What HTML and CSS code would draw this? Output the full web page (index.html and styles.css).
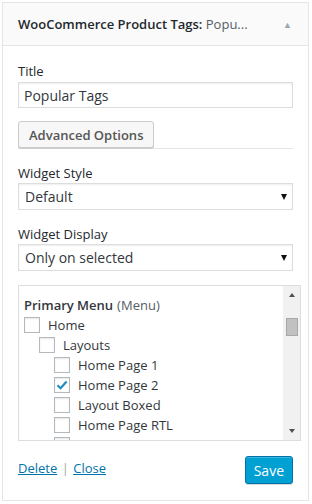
FILE: index.html
```html
<html>
  <head>
    <title>Widget</title>
    <link rel="stylesheet" href="styles.css">
  </head>
  <body>
    <div class="widget">
      <!-- Cabeçalho do widget -->
      <div class="widget-top">
        <div class="widget-title">WooCommerce Product Tags: <span class="in-title">Popu...</span></div>
        <span class="toggle">&#9650;</span>
      </div>
      <div class="widget-inside">
        <p class="label">Title</p>
        <input class="text-field" type="text" value="Popular Tags">

        <div class="tabs">
          <button class="button">Advanced Options</button>
        </div>

        <p class="label">Widget Style</p>
        <div class="select-wrap">
          <select class="select"><option>Default</option></select>
          <span class="arrow"></span>
        </div>

        <p class="label">Widget Display</p>
        <div class="select-wrap">
          <select class="select"><option>Only on selected</option></select>
          <span class="arrow"></span>
        </div>

        <!-- Lista de páginas com rolagem -->
        <div class="checklist">
          <ul class="items">
            <li class="group"><b>Primary Menu</b> (Menu)</li>
            <li class="lvl0"><span class="check"></span>Home</li>
            <li class="lvl1"><span class="check"></span>Layouts</li>
            <li class="lvl2"><span class="check"></span>Home Page 1</li>
            <li class="lvl2"><span class="check checked"><svg width="14" height="14" viewBox="0 0 14 14"><path d="M2.5 7.2 L5.6 10.2 L11.6 3.4" fill="none" stroke="#1e8cbe" stroke-width="2.2"/></svg></span>Home Page 2</li>
            <li class="lvl2"><span class="check"></span>Layout Boxed</li>
            <li class="lvl2"><span class="check"></span>Home Page RTL</li>
            <li class="lvl2"><span class="check"></span>Home Page LTR</li>
          </ul>
          <div class="scrollbar">
            <span class="sb-up"></span>
            <span class="sb-thumb"></span>
            <span class="sb-down"></span>
          </div>
        </div>

        <div class="widget-control">
          <div class="links"><a href="#">Delete</a> <span class="sep">|</span> <a href="#">Close</a></div>
          <button class="button-primary">Save</button>
        </div>
      </div>
    </div>
  </body>
</html>
```

FILE: styles.css
```css
/* Página */
body {
  margin: 0;
  padding: 2px;
  background-color: #ffffff;
  font-family: "Open Sans", sans-serif;
  font-size: 13px;
  color: #23282d;
}

/* Caixa do widget */
.widget {
  width: 305px;
  height: 497px;
  border: 1px solid #e5e5e5;
  background-color: #ffffff;
  display: flex;
  flex-direction: column;
}

.widget-top {
  height: 42px;
  background-color: #fafafa;
  border-bottom: 1px solid #e5e5e5;
  display: flex;
  align-items: center;
  justify-content: space-between;
  padding: 0 16px 0 15px;
}
.widget-title {
  font-weight: 600;
  font-size: 13px;
  white-space: nowrap;
}
.in-title {
  font-weight: 400;
  color: #555d66;
}
.toggle {
  font-size: 9px;
  color: #a0a5aa;
}

.widget-inside {
  flex: 1;
  padding: 16px 15px 0 15px;
  display: flex;
  flex-direction: column;
}

/* Rótulos e campos */
.label {
  margin: 0;
  line-height: 18px;
}
.text-field {
  margin-top: 2px;
  height: 26px;
  border: 1px solid #dddddd;
  box-shadow: inset 0 1px 2px rgba(0, 0, 0, 0.07);
  font-family: "Open Sans", sans-serif;
  font-size: 14px;
  color: #32373c;
  padding: 0 5px;
  outline: none;
}

.tabs {
  margin-top: 13px;
  margin-bottom: 15px;
  border-bottom: 1px solid #e5e5e5;
  display: flex;
}
.button {
  height: 27px;
  padding: 0 10px;
  border: 1px solid #cccccc;
  border-radius: 3px;
  background-color: #f7f7f7;
  box-shadow: 0 1px 0 #cccccc;
  font-family: "Open Sans", sans-serif;
  font-size: 13px;
  font-weight: 600;
  color: #555555;
}

.select-wrap {
  margin-top: 1px;
  margin-bottom: 15px;
  display: grid;
}
.select,
.arrow {
  grid-area: 1 / 1;
}
.select {
  appearance: none;
  height: 27px;
  border: 1px solid #dddddd;
  box-shadow: inset 0 1px 2px rgba(0, 0, 0, 0.07);
  background-color: #ffffff;
  font-family: "Open Sans", sans-serif;
  font-size: 14px;
  color: #32373c;
  padding: 0 6px;
  outline: none;
}
.arrow {
  justify-self: end;
  align-self: center;
  margin-right: 6px;
  width: 0;
  height: 0;
  border-left: 3.5px solid transparent;
  border-right: 3.5px solid transparent;
  border-top: 6px solid #111111;
  pointer-events: none;
}

/* Lista com barra de rolagem */
.checklist {
  margin-top: -1px;
  margin-right: -8px;
  height: 154px;
  border: 1px solid #dddddd;
  display: flex;
  overflow: hidden;
}
.items {
  flex: 1;
  margin: 0;
  padding: 9px 0 0 5px;
  list-style: none;
  overflow: hidden;
}
.items li {
  height: 20px;
  display: flex;
  align-items: center;
  font-size: 13px;
  color: #32373c;
  white-space: nowrap;
}
.items .group {
  color: #555d66;
}
.items .group b {
  font-weight: 600;
  color: #32373c;
  margin-right: 4px;
}
.lvl1 { padding-left: 15px; }
.lvl2 { padding-left: 30px; }
.check {
  width: 14px;
  height: 14px;
  border: 1px solid #b4b9be;
  background-color: #ffffff;
  box-shadow: inset 0 1px 2px rgba(0, 0, 0, 0.1);
  margin-right: 8px;
  display: flex;
  align-items: center;
  justify-content: center;
}

.scrollbar {
  width: 17px;
  background-color: #f1f1f1;
  display: flex;
  flex-direction: column;
  align-items: center;
}
.sb-up,
.sb-down {
  width: 0;
  height: 0;
  border-left: 3.5px solid transparent;
  border-right: 3.5px solid transparent;
}
.sb-up {
  margin-top: 7px;
  border-bottom: 4px solid #505050;
}
.sb-thumb {
  margin-top: 21px;
  width: 10px;
  height: 16px;
  background-color: #c1c1c1;
  border: 1px solid #a8a8a8;
}
.sb-down {
  margin-top: auto;
  margin-bottom: 7px;
  border-top: 4px solid #505050;
}

/* Rodapé do widget */
.widget-control {
  margin-top: 15px;
  display: flex;
  justify-content: space-between;
  align-items: center;
}
.links {
  margin-top: -4px;
}
.links a {
  color: #0073aa;
  text-decoration: underline;
}
.sep {
  color: #a0a5aa;
  margin: 0 1px;
}
.button-primary {
  height: 28px;
  padding: 0 8px;
  border: 1px solid #0073aa;
  border-radius: 3px;
  background-color: #00a0d2;
  box-shadow: inset 0 1px 0 rgba(120, 200, 230, 0.5), 0 1px 0 rgba(0, 0, 0, 0.15);
  font-family: "Open Sans", sans-serif;
  font-size: 14px;
  color: #ffffff;
}
```
